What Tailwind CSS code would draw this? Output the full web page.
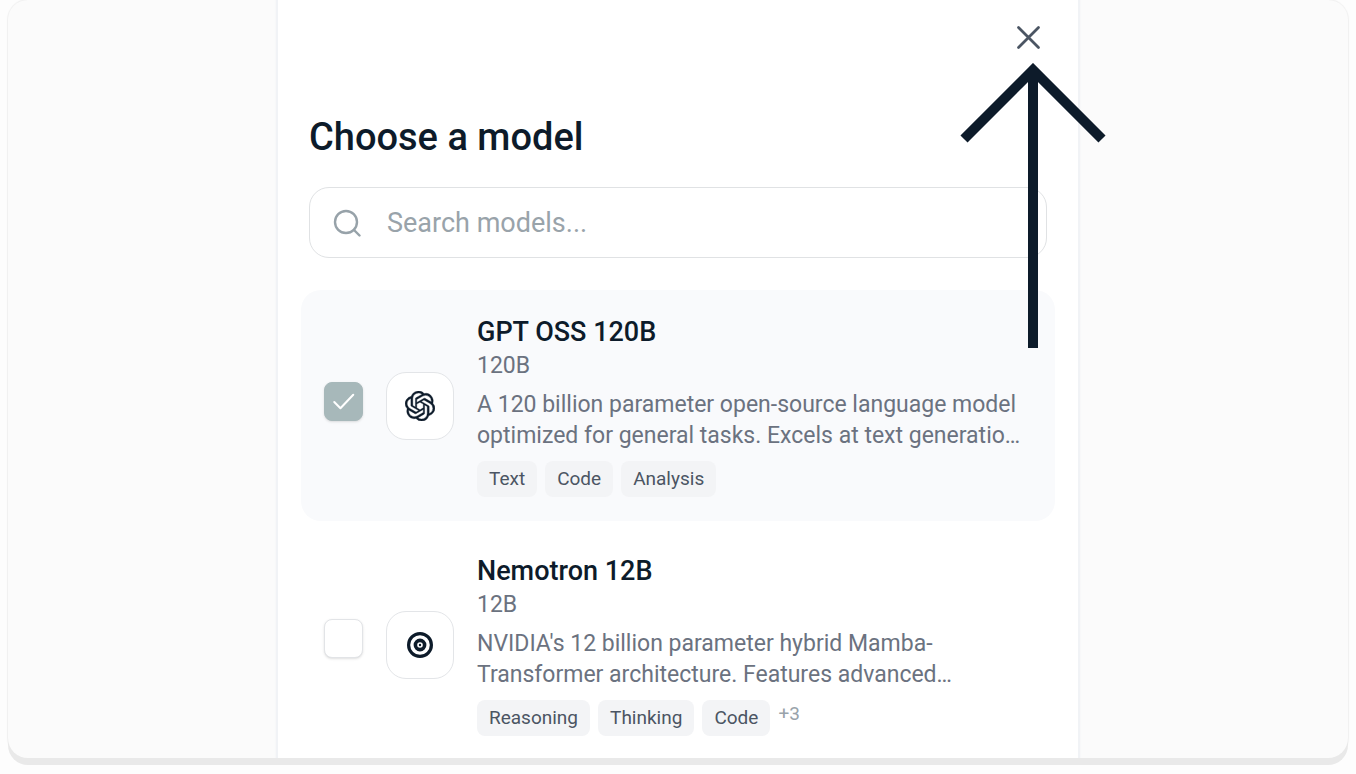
<!DOCTYPE html>
<html lang="en">
<head>
  <meta charset="UTF-8" />
  <meta name="viewport" content="width=device-width, initial-scale=1.0" />
  <title>Choose a model</title>
  <script src="https://cdn.jsdelivr.net/npm/@tailwindcss/browser@4"></script>
</head>
<body class="h-screen bg-[#fdfdfd] px-2 pb-4 font-['Roboto',sans-serif] text-[#0d1b2a]">

  <!-- Frame -->
  <div class="h-full rounded-[20px] bg-[#fbfbfb] shadow-[0_7px_0_#e9e9e9,0_0_1px_1px_#f0f0f0]">
    <div class="h-full overflow-hidden rounded-[20px]">

    <!-- Panel -->
    <main class="relative mx-auto min-h-full w-full max-w-[800px] bg-white px-[31px] shadow-[0_0_0_2px_#f1f3f6,0_0_2px_2px_#f1f3f6]">
      <div class="flex justify-end pt-[25px] pr-[6px]">
        <button type="button" aria-label="Close" class="text-[#4b5563]">
          <svg class="size-[25px]" viewBox="0 0 25 25" fill="none" stroke="currentColor" stroke-width="2.8" stroke-linecap="round">
            <path d="M2.5 2.5l20 20M22.5 2.5l-20 20" />
          </svg>
        </button>
      </div>

      <h1 class="mt-[63px] text-[38px] leading-[48px] font-medium">Choose a model</h1>

      <label class="mt-[26px] flex h-[71px] items-center gap-[26px] rounded-[20px] border border-[#e0e2e4] px-[23px]">
        <svg class="size-7 shrink-0 text-[#97a2a9]" viewBox="0 0 28 28" fill="none" stroke="currentColor" stroke-width="2.4" stroke-linecap="round">
          <circle cx="13" cy="13" r="11" />
          <path d="M21 21l5.500 5.500" />
        </svg>
        <input type="text" aria-label="Search models" placeholder="Search models..." class="min-w-0 flex-1 text-[27px] leading-9 outline-none placeholder:text-[#99a3aa]" />
      </label>

      <ul class="-mx-2 mt-8 space-y-2">
        <li class="flex items-center gap-[23px] rounded-[20px] bg-[#f9fafc] px-[23px] py-6">
          <div class="relative mb-2 size-[39px] shrink-0">
            <input type="checkbox" id="gpt" checked class="block size-full appearance-none rounded-[8px] border border-[#e2e4e7] bg-white shadow-sm checked:border-[#a7b8ba] checked:bg-[#a7b8ba]" />
            <svg class="pointer-events-none absolute inset-0 size-full" viewBox="0 0 38 38" fill="none" stroke="#fff" stroke-width="2" stroke-linecap="round" stroke-linejoin="round">
              <path d="M10 19.500l6 6L28.500 12.500" />
            </svg>
          </div>
          <div class="flex size-[68px] shrink-0 items-center justify-center rounded-[20px] border border-[#e3e5e8] bg-white">
            <svg class="size-[30px]" viewBox="0 0 24 24" fill="currentColor" stroke="currentColor" stroke-width="0.3">
              <path d="M22.2819 9.8211a5.9847 5.9847 0 0 0-.5157-4.9108 6.0462 6.0462 0 0 0-6.5098-2.9A6.0651 6.0651 0 0 0 4.9807 4.1818a5.9847 5.9847 0 0 0-3.9977 2.9 6.0462 6.0462 0 0 0 .7427 7.0966 5.98 5.98 0 0 0 .511 4.9107 6.051 6.051 0 0 0 6.5146 2.9001A5.9847 5.9847 0 0 0 13.2599 24a6.0557 6.0557 0 0 0 5.7718-4.2058 5.9894 5.9894 0 0 0 3.9977-2.9001 6.0557 6.0557 0 0 0-.7475-7.073zm-9.022 12.6081a4.4755 4.4755 0 0 1-2.8764-1.0408l.1419-.0804 4.7783-2.7582a.7948.7948 0 0 0 .3927-.6813v-6.7369l2.02 1.1686a.071.071 0 0 1 .038.052v5.5826a4.504 4.504 0 0 1-4.4945 4.4944zm-9.6607-4.1254a4.4708 4.4708 0 0 1-.5346-3.0137l.142.0852 4.783 2.7582a.7712.7712 0 0 0 .7806 0l5.8428-3.3685v2.3324a.0804.0804 0 0 1-.0332.0615L9.74 19.9502a4.4992 4.4992 0 0 1-6.1408-1.6464zM2.3408 7.8956a4.485 4.485 0 0 1 2.3655-1.9728V11.6a.7664.7664 0 0 0 .3879.6765l5.8144 3.3543-2.0201 1.1685a.0757.0757 0 0 1-.071 0l-4.8303-2.7865A4.504 4.504 0 0 1 2.3408 7.872zm16.5963 3.8558L13.1038 8.364 15.1192 7.2a.0757.0757 0 0 1 .071 0l4.8303 2.7913a4.4944 4.4944 0 0 1-.6765 8.1042v-5.6772a.79.79 0 0 0-.407-.667zm2.0107-3.0231l-.142-.0852-4.7735-2.7818a.7759.7759 0 0 0-.7854 0L9.409 9.2297V6.8974a.0662.0662 0 0 1 .0284-.0615l4.8303-2.7866a4.4992 4.4992 0 0 1 6.6802 4.66zM8.3065 12.863l-2.02-1.1638a.0804.0804 0 0 1-.038-.0567V6.0742a4.4992 4.4992 0 0 1 7.3757-3.4537l-.142.0805L8.704 5.459a.7948.7948 0 0 0-.3927.6813zm1.0976-2.3654l2.602-1.4998 2.6069 1.4998v2.9994l-2.5974 1.4997-2.6067-1.4997Z" />
            </svg>
          </div>
          <div class="min-w-0 flex-1">
            <label for="gpt" class="block text-[27px] leading-9 font-medium">GPT OSS 120B</label>
            <p class="text-[23px] leading-[31px] text-[#6b7280]">120B</p>
            <p class="mt-2 text-[23px] leading-[31px] text-[#6b7280]">A 120 billion parameter open-source language model optimized for general tasks. Excels at text generatio…</p>
            <div class="mt-[10px] flex items-start gap-2 text-[19px] text-[#4b5563]">
              <span class="rounded-[8px] bg-[#f3f4f6] px-3 leading-9">Text</span>
              <span class="rounded-[8px] bg-[#f3f4f6] px-3 leading-9">Code</span>
              <span class="rounded-[8px] bg-[#f3f4f6] px-3 leading-9">Analysis</span>
            </div>
          </div>
        </li>

        <li class="flex items-center gap-[23px] rounded-[20px] px-[23px] py-6">
          <div class="relative mb-3 size-[39px] shrink-0">
            <input type="checkbox" id="nemotron" class="block size-full appearance-none rounded-[8px] border border-[#e2e4e7] bg-white shadow-sm checked:border-[#a7b8ba] checked:bg-[#a7b8ba]" />
          </div>
          <div class="flex size-[68px] shrink-0 items-center justify-center rounded-[20px] border border-[#e3e5e8] bg-white">
            <svg class="size-[26px]" viewBox="0 0 26 26" fill="none" stroke="currentColor">
              <circle cx="13" cy="13" r="11.400" stroke-width="3.200" />
              <circle cx="13" cy="13" r="4.600" stroke-width="3.600" />
              <circle cx="13" cy="13" r="1.200" fill="currentColor" stroke="none" />
            </svg>
          </div>
          <div class="min-w-0 flex-1">
            <label for="nemotron" class="block text-[27px] leading-9 font-medium">Nemotron 12B</label>
            <p class="text-[23px] leading-[31px] text-[#6b7280]">12B</p>
            <p class="mt-2 text-[23px] leading-[31px] text-[#6b7280]">NVIDIA's 12 billion parameter hybrid Mamba-Transformer architecture. Features advanced…</p>
            <div class="mt-[10px] flex items-start gap-2 text-[19px] text-[#4b5563]">
              <span class="rounded-[8px] bg-[#f3f4f6] px-3 leading-9">Reasoning</span>
              <span class="rounded-[8px] bg-[#f3f4f6] px-3 leading-9">Thinking</span>
              <span class="rounded-[8px] bg-[#f3f4f6] px-3 leading-9">Code</span>
              <span class="leading-[27px] text-[#99a3aa]">+3</span>
            </div>
          </div>
        </li>
      </ul>

      <!-- Arrow pointing at the close button -->
      <svg class="pointer-events-none absolute top-[63px] right-[-28px] h-[285px] w-[146px]" viewBox="0 0 146 285" fill="none" stroke="#0d1b2a" stroke-width="10">
        <path d="M4 76L73 7L142 76M73 8V285" />
      </svg>
    </main>
    </div>
  </div>

</body>
</html>
